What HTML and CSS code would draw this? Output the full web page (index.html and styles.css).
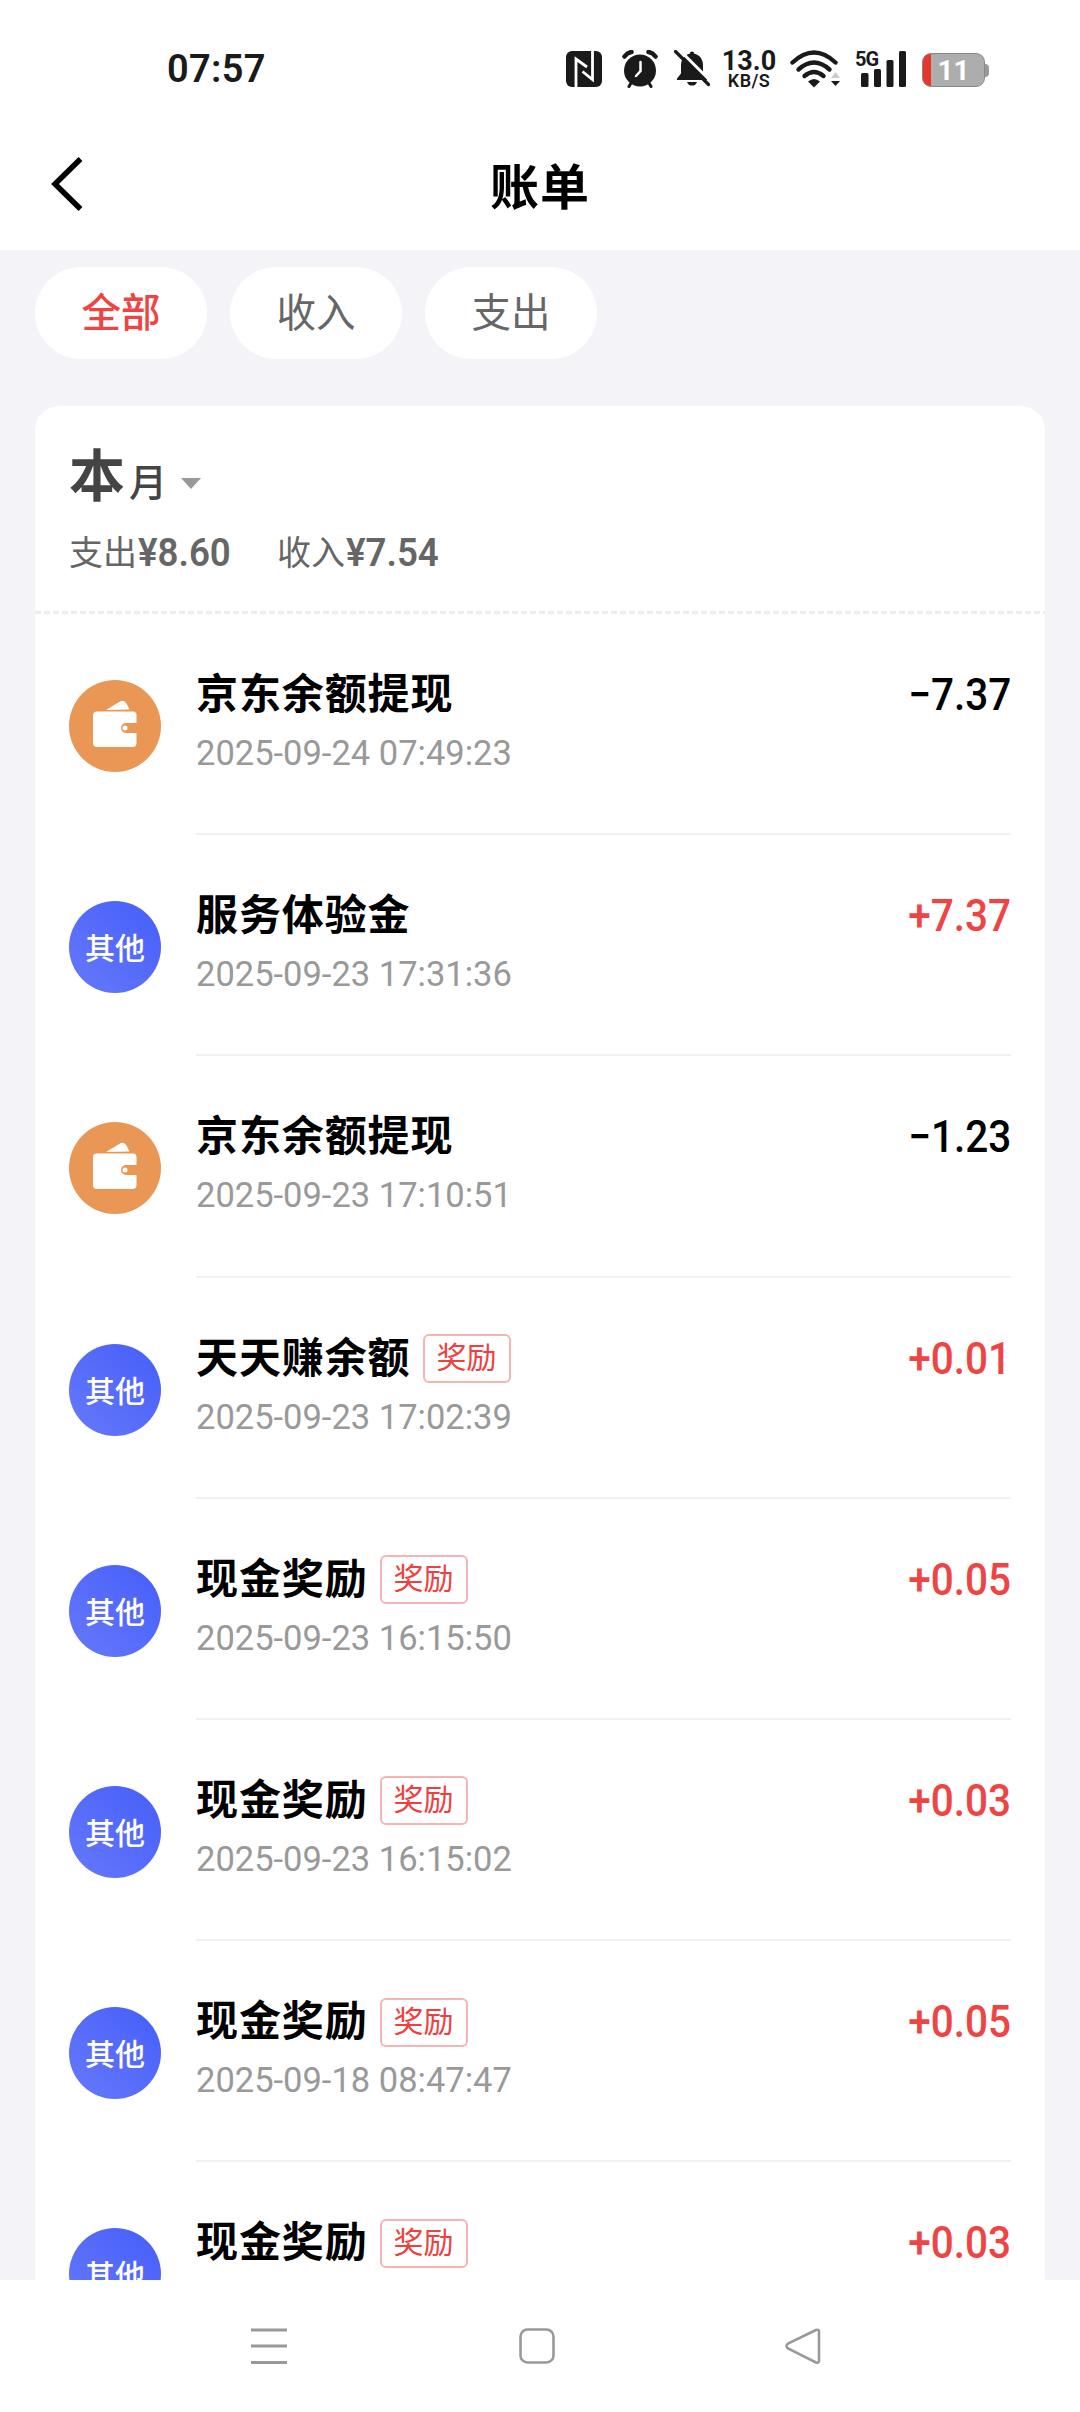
FILE: index.html
```html
<!DOCTYPE html>
<html lang="zh-CN">
<head>
  <meta charset="UTF-8">
  <title>账单</title>
  <link rel="stylesheet" href="styles.css">
</head>
<body>
  <div class="status">
    <span class="time">07:57</span>
    <svg class="nfc" width="36" height="36" viewBox="0 0 36 36">
      <rect width="36" height="36" rx="6" fill="#1a1a1a"/>
      <path d="M10 36V8l11 8M26.500 0v28.500l-10-8" fill="none" stroke="#fff" stroke-width="2.800"/>
    </svg>
    <svg class="alarm" width="36" height="38" viewBox="0 0 36 38">
      <circle cx="18" cy="20.500" r="16" fill="#1a1a1a"/>
      <path d="M2.500 6.500q3-4 7-4.500M33.500 6.500q-3-4-7-4.500" fill="none" stroke="#1a1a1a" stroke-width="4.500" stroke-linecap="round"/>
      <path d="M9 33l-2 3.500M27 33l2 3.500" stroke="#1a1a1a" stroke-width="3" stroke-linecap="round"/>
      <path d="M18.500 12v9l-4.500 5" fill="none" stroke="#fff" stroke-width="2.500" stroke-linecap="round"/>
    </svg>
    <svg class="bell" width="36" height="37" viewBox="0 0 36 37">
      <path d="M18 1.500c1.500 0 2 .8 2 2 6 1.500 9 6 9 12v8l4 5v1.500H3V28.500l4-5v-8c0-6 3-10.500 9-12 0-1.200.5-2 2-2z" fill="#1a1a1a"/>
      <path d="M13 32h10c-1 3-3 3.500-5 3.500s-4-.5-5-3.500z" fill="#1a1a1a"/>
      <path d="M4-1.500L38 32.500" stroke="#fff" stroke-width="3"/>
      <path d="M1.500 1.500L34.500 34.500" stroke="#1a1a1a" stroke-width="3.200" stroke-linecap="round"/>
    </svg>
    <div class="speed"><b>13.0</b><span>KB/S</span></div>
    <svg class="wifi" width="52" height="38" viewBox="0 0 52 38">
      <g fill="none" stroke="#1a1a1a" stroke-width="4.400" stroke-linecap="round">
        <path d="M2.500 12.500q21.500-20 43 0"/>
        <path d="M8.500 19.500q15.500-14 31 0"/>
        <path d="M14.500 26q9.500-8 19 0"/>
      </g>
      <path d="M18 31.500q6-5 12 0L24 37.500z" fill="#1a1a1a"/>
      <path d="M41 28l4.500-6 4.500 6z" fill="#ccc"/>
      <path d="M41 31h9l-4.500 5z" fill="#1a1a1a"/>
    </svg>
    <div class="signal">
      <span>5G</span>
      <svg width="46" height="36" viewBox="0 0 46 36" fill="#1a1a1a">
        <rect x="0" y="22" width="7.500" height="14" rx="1.500"/>
        <rect x="13" y="18" width="7" height="18" rx="1.500"/>
        <rect x="25.500" y="9" width="7" height="27" rx="1.500"/>
        <rect x="38" y="0" width="7" height="36" rx="1.500"/>
      </svg>
    </div>
    <div class="battery"><span>11</span></div>
  </div>

  <header class="header">
    <svg width="32" height="56" viewBox="0 0 32 56"><path d="M29.500 3L4 28l25.500 25" fill="none" stroke="#000" stroke-width="5.500"/></svg>
    <h1>账单</h1>
  </header>

  <main class="page">
    <nav class="tabs">
      <a class="tab active">全部</a>
      <a class="tab">收入</a>
      <a class="tab">支出</a>
    </nav>

    <section class="card">
      <div class="summary">
        <div class="month"><b>本</b><span>月</span><i class="arrow"></i></div>
        <div class="totals">
          <div>支出<b>¥8.60</b></div>
          <div>收入<b>¥7.54</b></div>
        </div>
      </div>

      <div class="row">
        <div class="icon wallet">
          <svg width="44" height="48" viewBox="0 0 44 48">
            <path d="M13 10L27 1.500q4-2 6.500 2l3 6z" fill="#fff"/>
            <path d="M4 11.500h36q3.500 0 3.500 3.500V23H33a5 5 0 0 0 0 10h10.500v10q0 4-4 4H4q-4 0-4-4V15.500q0-4 4-4z" fill="#fff"/>
            <circle cx="32" cy="28" r="2.500" fill="#fff"/>
          </svg>
        </div>
        <div class="body">
          <div class="info"><div class="name">京东余额提现</div><div class="date">2025-09-24 07:49:23</div></div>
          <div class="amount">−7.37</div>
        </div>
      </div>
      <div class="row">
        <div class="icon">其他</div>
        <div class="body">
          <div class="info"><div class="name">服务体验金</div><div class="date">2025-09-23 17:31:36</div></div>
          <div class="amount in">+7.37</div>
        </div>
      </div>
      <div class="row">
        <div class="icon wallet">
          <svg width="44" height="48" viewBox="0 0 44 48">
            <path d="M13 10L27 1.500q4-2 6.500 2l3 6z" fill="#fff"/>
            <path d="M4 11.500h36q3.500 0 3.500 3.500V23H33a5 5 0 0 0 0 10h10.500v10q0 4-4 4H4q-4 0-4-4V15.500q0-4 4-4z" fill="#fff"/>
            <circle cx="32" cy="28" r="2.500" fill="#fff"/>
          </svg>
        </div>
        <div class="body">
          <div class="info"><div class="name">京东余额提现</div><div class="date">2025-09-23 17:10:51</div></div>
          <div class="amount">−1.23</div>
        </div>
      </div>
      <div class="row">
        <div class="icon">其他</div>
        <div class="body">
          <div class="info"><div class="name">天天赚余额<span class="tag">奖励</span></div><div class="date">2025-09-23 17:02:39</div></div>
          <div class="amount in">+0.01</div>
        </div>
      </div>
      <div class="row">
        <div class="icon">其他</div>
        <div class="body">
          <div class="info"><div class="name">现金奖励<span class="tag">奖励</span></div><div class="date">2025-09-23 16:15:50</div></div>
          <div class="amount in">+0.05</div>
        </div>
      </div>
      <div class="row">
        <div class="icon">其他</div>
        <div class="body">
          <div class="info"><div class="name">现金奖励<span class="tag">奖励</span></div><div class="date">2025-09-23 16:15:02</div></div>
          <div class="amount in">+0.03</div>
        </div>
      </div>
      <div class="row">
        <div class="icon">其他</div>
        <div class="body">
          <div class="info"><div class="name">现金奖励<span class="tag">奖励</span></div><div class="date">2025-09-18 08:47:47</div></div>
          <div class="amount in">+0.05</div>
        </div>
      </div>
      <div class="row">
        <div class="icon">其他</div>
        <div class="body">
          <div class="info"><div class="name">现金奖励<span class="tag">奖励</span></div></div>
          <div class="amount in">+0.03</div>
        </div>
      </div>
    </section>
  </main>

  <footer class="navbar">
    <svg width="36" height="38" viewBox="0 0 36 38" fill="none" stroke="#999" stroke-width="3"><path d="M0 3h36M0 19h36M0 35.500h36"/></svg>
    <svg width="36" height="38" viewBox="0 0 36 38" fill="none" stroke="#999" stroke-width="2.600"><rect x="1.500" y="2.500" width="33" height="33" rx="7"/></svg>
    <svg width="36" height="38" viewBox="0 0 36 38" fill="none" stroke="#999" stroke-width="2.600"><path d="M31 3L3 16.500q-3 2.500 0 5L31 35.500q3 1 3-2v-29q0-2.500-3-1.500z"/></svg>
  </footer>
</body>
</html>
```
FILE: styles.css
```css
* {
  box-sizing: border-box;
}
body {
  margin: 0;
  width: 1080px;
  height: 2412px;
  overflow: hidden;
  display: flex;
  flex-direction: column;
  background: #fff;
  color: #000;
  font-family: Roboto, "Noto Sans CJK SC", sans-serif;
}
svg {
  display: block;
  flex: none;
}

/* status bar */
.status {
  height: 120px;
  display: flex;
  align-items: flex-start;
  padding: 50px 0 0 167px;
  color: #1a1a1a;
}
.time {
  width: 399px;
  font-size: 38px;
  line-height: 38px;
  font-weight: 600;
  letter-spacing: 0.3px;
}
.nfc {
  margin-top: 1px;
}
.alarm {
  margin-left: 20px;
}
.bell {
  margin-left: 16px;
  margin-right: 10px;
}
.speed {
  width: 58px;
  display: flex;
  flex-direction: column;
  align-items: center;
}
.speed b {
  font-size: 27px;
  line-height: 23px;
  font-weight: 700;
}
.speed span {
  font-size: 18px;
  line-height: 16px;
  font-weight: 600;
  letter-spacing: 0.4px;
}
.wifi {
  margin-left: 12px;
}
.signal {
  width: 52px;
  margin: 1px 0 0 13px;
  display: grid;
}
.signal span, .signal svg {
  grid-area: 1 / 1;
}
.signal svg {
  justify-self: end;
}
.signal span {
  font-size: 20px;
  line-height: 16px;
  font-weight: 700;
  letter-spacing: -1px;
}
.battery {
  width: 63px;
  height: 34px;
  margin: 3px 0 0 15px;
  border: 1px solid #888;
  border-radius: 9px;
  background: linear-gradient(90deg, #e8352c 8px, #adadad 8px);
  position: relative;
  text-align: center;
  color: #fff;
}
.battery span {
  font-size: 28px;
  line-height: 34px;
  font-weight: 700;
}
.battery::after {
  content: "";
  position: absolute;
  right: -5px;
  top: 10px;
  width: 4px;
  height: 13px;
  border-radius: 0 4px 4px 0;
  background: #999;
}

.header {
  height: 130px;
  display: grid;
  grid-template-columns: 200px 1fr 200px;
  align-items: start;
  padding-top: 36px;
}
.header svg {
  margin-left: 51px;
}
.header h1 {
  margin: 0;
  text-align: center;
  font-size: 49px;
  line-height: 65px;
  letter-spacing: 1px;
}

.page {
  height: 2030px;
  padding: 17px 35px 0;
  overflow: hidden;
  background: #f3f3f8;
}
.tabs {
  display: flex;
  gap: 23px;
  margin-bottom: 47px;
}
.tab {
  width: 172px;
  height: 92px;
  border-radius: 46px;
  background: #fff;
  color: #666;
  font-size: 39.5px;
  line-height: 94px;
  text-align: center;
}
.tab.active {
  color: #ee4444;
  font-weight: 500;
}

.card {
  background: #fff;
  border-radius: 24px 24px 0 0;
}
.summary {
  height: 208px;
  padding: 36px 34px 0;
  background: repeating-linear-gradient(90deg, #ececec 0 6px, #fff 6px 9px) bottom / 100% 3px no-repeat;
}
.month {
  height: 70px;
  display: flex;
  align-items: baseline;
  color: #444;
}
.month b {
  font-size: 56px;
  line-height: 70px;
}
.month span {
  margin-left: 4px;
  font-size: 38px;
  font-weight: 500;
}
.arrow {
  margin-left: 14px;
  margin-bottom: 6px;
  align-self: center;
  margin-top: 18px;
  border: 10px solid transparent;
  border-top: 11px solid #999;
  border-bottom: 0;
}
.totals {
  display: flex;
  gap: 44px;
  margin-top: 15px;
  color: #666;
  font-size: 34px;
  line-height: 52px;
}
.totals div {
  display: flex;
  width: 164px;
  white-space: nowrap;
}
.totals b {
  margin-left: 1px;
  font-size: 39px;
  font-weight: 600;
  transform: scaleX(0.94);
  transform-origin: left;
}

.row {
  height: 221.2px;
  display: flex;
  padding: 0 34px;
}
.icon {
  flex: none;
  width: 92px;
  height: 92px;
  margin: 66px 35px 0 0;
  border-radius: 50%;
  background: linear-gradient(45deg, #6679fb, #465ef9);
  color: #fff;
  font-size: 30px;
  font-weight: 500;
  line-height: 95px;
  text-align: center;
}
.icon.wallet {
  padding: 20px 0 0 24px;
  background: #ea9654;
}
.body {
  flex: 1;
  display: flex;
  justify-content: space-between;
  padding-top: 52px;
  border-bottom: 2px solid #f1f1f1;
}
.name {
  height: 58px;
  display: flex;
  align-items: center;
  line-height: 54px;
  font-size: 42px;
  font-weight: 700;
  letter-spacing: 0.9px;
}
.tag {
  width: 88px;
  height: 49px;
  margin-left: 12px;
  border: 2px solid #f5b5b5;
  border-radius: 6px;
  color: #ee4040;
  font-size: 30px;
  font-weight: 400;
  line-height: 43px;
  letter-spacing: 0;
  text-align: center;
}
.date {
  margin-top: 7px;
  color: #999;
  font-size: 34.5px;
  line-height: 44px;
}
.amount {
  font-size: 44.5px;
  line-height: 59px;
  font-weight: 490;
  transform: scaleX(0.91);
  transform-origin: right;
}
.amount.in {
  color: #ee4444;
}

.navbar {
  height: 132px;
  display: flex;
  gap: 232px;
  padding: 47px 0 0 251px;
  background: #fff;
}
.navbar svg:last-child {
  margin-left: -2px;
}
```
